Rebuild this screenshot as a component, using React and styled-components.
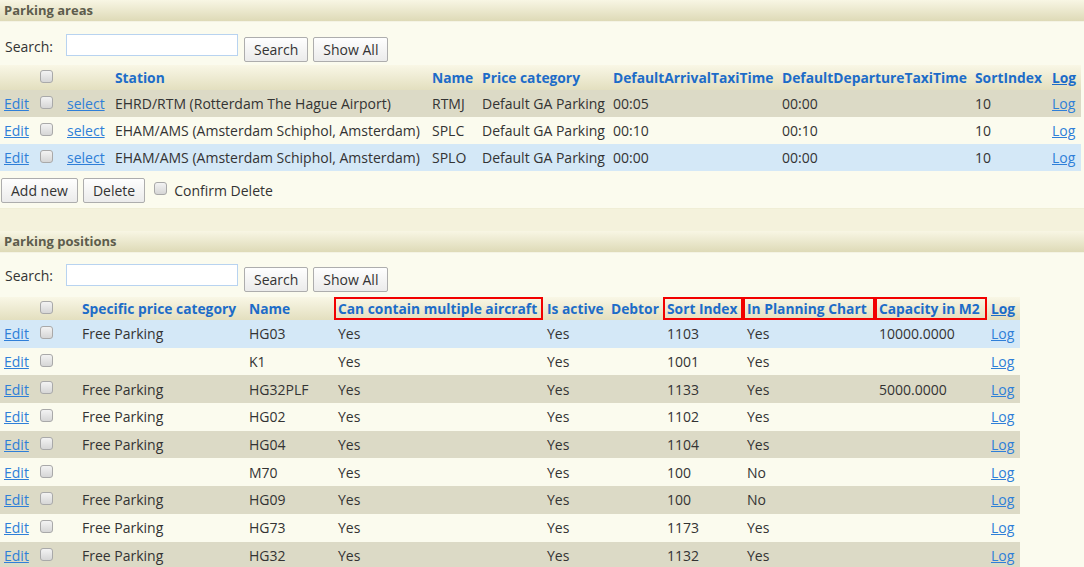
import React from 'react';
import styled, { createGlobalStyle } from 'styled-components';

const GlobalStyle = createGlobalStyle`
  body {
    margin: 0;
    background: #fbfbee;
    font-family: "Open Sans", "Noto Sans", sans-serif;
    font-size: 14px;
    color: #333;
  }
`

const Page = styled.div`
  width: 1084px;
  display: flex;
  flex-direction: column;
`

const SectionTitle = styled.div`
  height: 21px;
  line-height: 21px;
  padding-left: 4px;
  font-weight: bold;
  font-size: 13px;
  color: #5d5c4c;
  background: linear-gradient(#f8f6e4, #dedab7);
  border-bottom: 1px solid #f4f3e4;
`

const SearchBar = styled.div`
  display: flex;
  align-items: center;
  height: ${p => p.h}px;
  box-sizing: border-box;
  padding: ${p => p.$top}px 0 0 5px;

  label {
    width: 61px;
  }
`

const SearchInput = styled.input`
  width: 172px;
  height: 22px;
  box-sizing: border-box;
  border: 1px solid #b8d3f0;
  background: #fff;
  margin: -2px 6px 0 0;
  outline: none;
`

const Button = styled.button`
  height: 25px;
  box-sizing: border-box;
  padding: 0 9px;
  margin-right: 5px;
  border: 1px solid #adadad;
  border-radius: 2px;
  background: linear-gradient(#fefefe, #ebebeb);
  font-family: inherit;
  font-size: 14px;
  color: #333;
  margin-top: ${p => p.$offset || 0}px;
`

const Check = styled.input.attrs({ type: 'checkbox' })`
  appearance: none;
  width: 13px;
  height: 13px;
  margin: 0;
  box-sizing: border-box;
  border: 1px solid #a9a9a9;
  border-radius: 3px;
  background: linear-gradient(#f3f3f3, #d6d6d6);
  vertical-align: middle;
  position: relative;
  top: -3px;
`

const Table = styled.table`
  width: ${p => p.w}px;
  table-layout: fixed;
  border-collapse: collapse;
`

const HeadRow = styled.tr`
  height: ${p => p.h}px;
  background: linear-gradient(#f9f7e6, #e3dfbf);
`

const Th = styled.th`
  text-align: left;
  padding: 0 0 0 4px;
  font-size: 13.8px;
  font-weight: bold;
  color: #1d6cc8;
  white-space: nowrap;
  box-shadow: ${p => p.$marked ? 'inset 0 0 0 2px #f20000' : 'none'};
`

const tones = {
  plain: 'transparent',
  alt: '#dcdac6',
  selected: '#d4e8f7',
}

const Row = styled.tr`
  height: ${p => p.h}px;
  background: ${p => tones[p.$tone]};
`

const Td = styled.td`
  padding: 0 0 0 4px;
  white-space: nowrap;
  overflow: hidden;
`

const Link = styled.a`
  color: #2f7fd8;
  text-decoration: underline;
  cursor: pointer;
`

const HeadLink = styled(Link)`
  color: #1d6cc8;
`

const Actions = styled.div`
  display: flex;
  align-items: center;
  height: 35px;
  padding-left: 1px;
  padding-top: 2px;

  span {
    margin-left: 7px;
  }
`

const Band = styled.div`
  height: 22px;
  background: #f4f2dc;
  border-top: 1px solid #f0eed6;
`

const areas = [
  { station: 'EHRD/RTM (Rotterdam The Hague Airport)', name: 'RTMJ', price: 'Default GA Parking', arr: '00:05', dep: '00:00', sort: '10', tone: 'alt' },
  { station: 'EHAM/AMS (Amsterdam Schiphol, Amsterdam)', name: 'SPLC', price: 'Default GA Parking', arr: '00:10', dep: '00:10', sort: '10', tone: 'plain' },
  { station: 'EHAM/AMS (Amsterdam Schiphol, Amsterdam)', name: 'SPLO', price: 'Default GA Parking', arr: '00:00', dep: '00:00', sort: '10', tone: 'selected' },
]

const positions = [
  { cat: 'Free Parking', name: 'HG03', sort: '1103', chart: 'Yes', cap: '10000.0000', tone: 'selected' },
  { cat: '', name: 'K1', sort: '1001', chart: 'Yes', cap: '', tone: 'plain' },
  { cat: 'Free Parking', name: 'HG32PLF', sort: '1133', chart: 'Yes', cap: '5000.0000', tone: 'alt' },
  { cat: 'Free Parking', name: 'HG02', sort: '1102', chart: 'Yes', cap: '', tone: 'plain' },
  { cat: 'Free Parking', name: 'HG04', sort: '1104', chart: 'Yes', cap: '', tone: 'alt' },
  { cat: '', name: 'M70', sort: '100', chart: 'No', cap: '', tone: 'plain' },
  { cat: 'Free Parking', name: 'HG09', sort: '100', chart: 'No', cap: '', tone: 'alt' },
  { cat: 'Free Parking', name: 'HG73', sort: '1173', chart: 'Yes', cap: '', tone: 'plain' },
  { cat: 'Free Parking', name: 'HG32', sort: '1132', chart: 'Yes', cap: '', tone: 'alt' },
]

const Search = ({ h, top }) => (
  <SearchBar h={h} $top={top}>
    <label>Search:</label>
    <SearchInput />
    <Button $offset={7}>Search</Button>
    <Button $offset={7}>Show All</Button>
  </SearchBar>
)

const Cols = ({ widths }) => (
  <colgroup>
    {widths.map((w, i) => <col key={i} style={{ width: w }} />)}
  </colgroup>
)

const App = () => {
  return (
    <Page>
      <GlobalStyle />
      <SectionTitle>Parking areas</SectionTitle>
      <Search h={43} top={5} />
      <Table w={1081}>
        <Cols widths={[36, 27, 48, 317, 50, 131, 169, 193, 77, 33]} />
        <thead>
          <HeadRow h={25}>
            <Th></Th>
            <Th><Check /></Th>
            <Th></Th>
            <Th>Station</Th>
            <Th>Name</Th>
            <Th>Price category</Th>
            <Th>DefaultArrivalTaxiTime</Th>
            <Th>DefaultDepartureTaxiTime</Th>
            <Th>SortIndex</Th>
            <Th><HeadLink>Log</HeadLink></Th>
          </HeadRow>
        </thead>
        <tbody>
          {areas.map((a, i) => (
            <Row key={i} h={27} $tone={a.tone}>
              <Td><Link>Edit</Link></Td>
              <Td><Check /></Td>
              <Td><Link>select</Link></Td>
              <Td>{a.station}</Td>
              <Td>{a.name}</Td>
              <Td>{a.price}</Td>
              <Td>{a.arr}</Td>
              <Td>{a.dep}</Td>
              <Td>{a.sort}</Td>
              <Td><Link>Log</Link></Td>
            </Row>
          ))}
        </tbody>
      </Table>
      <Actions>
        <Button>Add new</Button>
        <Button>Delete</Button>
        <Check style={{ marginLeft: 4, top: -2 }} />
        <span>Confirm Delete</span>
      </Actions>
      <Band />
      <SectionTitle>Parking positions</SectionTitle>
      <Search h={44} top={1} />
      <Table w={1020}>
        <Cols widths={[36, 42, 167, 89, 209, 64, 56, 80, 132, 112, 33]} />
        <thead>
          <HeadRow h={23}>
            <Th></Th>
            <Th><Check /></Th>
            <Th>Specific price category</Th>
            <Th>Name</Th>
            <Th $marked>Can contain multiple aircraft</Th>
            <Th>Is active</Th>
            <Th>Debtor</Th>
            <Th $marked>Sort Index</Th>
            <Th $marked>In Planning Chart</Th>
            <Th $marked>Capacity in M2</Th>
            <Th><HeadLink>Log</HeadLink></Th>
          </HeadRow>
        </thead>
        <tbody>
          {positions.map((p, i) => (
            <Row key={i} h={27.7} $tone={p.tone}>
              <Td><Link>Edit</Link></Td>
              <Td><Check /></Td>
              <Td>{p.cat}</Td>
              <Td>{p.name}</Td>
              <Td>Yes</Td>
              <Td>Yes</Td>
              <Td></Td>
              <Td>{p.sort}</Td>
              <Td>{p.chart}</Td>
              <Td>{p.cap}</Td>
              <Td><Link>Log</Link></Td>
            </Row>
          ))}
        </tbody>
      </Table>
    </Page>
  );
}

export default App;
